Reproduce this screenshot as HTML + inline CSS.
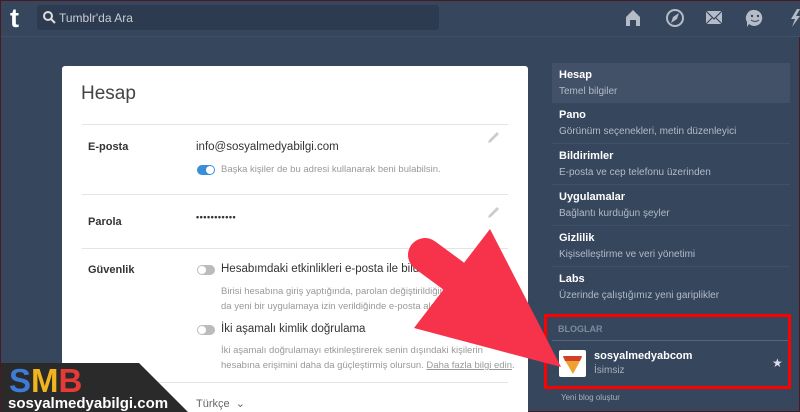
<!DOCTYPE html>
<html><head><meta charset="utf-8"><style>
*{margin:0;padding:0;box-sizing:border-box}
html{width:800px;height:412px;overflow:hidden}
body{width:800px;height:412px;overflow:hidden;background:#36465d;font-family:"Liberation Sans",Arial,sans-serif;position:relative;border:1px solid #4a1a22}
.hdr{position:absolute;left:0;top:0;width:800px;height:36px;background:#36465d;border-bottom:1px solid #3e4f68}
.logo{position:absolute;left:9px;top:2px;color:#fff;font-weight:bold;font-size:27px;font-family:"Liberation Sans",sans-serif}
.search{position:absolute;left:36px;top:4px;width:402px;height:25px;background:#2d3b50;border-radius:3px;color:#c8ccd3;font-size:12px;padding:6px 0 0 22px}
.card{position:absolute;left:61px;top:65px;width:466px;height:346px;background:#fff;border-radius:3px 3px 0 0}
.t{position:absolute;font-size:11px;color:#333;white-space:nowrap}
.g{position:absolute;font-size:9.5px;color:#999;white-space:nowrap}
.hr{position:absolute;left:20px;right:20px;height:1px;background:#e4e4e4}
.tg{position:absolute;width:18px;height:10px;border-radius:5px;background:#bbb}
.tg::after{content:"";position:absolute;top:1px;left:1px;width:8px;height:8px;border-radius:50%;background:#fff}
.tg.on{background:#3a8ed6}.tg.on::after{left:9px}
.side{position:absolute;left:551px;width:238px;height:41px;border-bottom:1px solid #3f5068;padding:6px 0 0 7px}
.side b{display:block;color:#fff;font-size:11px}
.side span{display:block;color:#b3bbc7;font-size:10px;margin-top:5px}
</style></head><body>
<div class="hdr">
<div class="logo">t</div>
<div class="search">Tumblr'da Ara
<svg style="position:absolute;left:6px;top:6px" width="13" height="13"><circle cx="5" cy="5" r="4" stroke="#ddd" stroke-width="2" fill="none"/><line x1="8" y1="8" x2="12" y2="12" stroke="#ddd" stroke-width="2"/></svg></div>
<svg style="position:absolute;left:622px;top:7px" width="180" height="20" fill="#b5bcc7">
<path d="M3 9 L10 2 L17 9 L17 18 L13 18 L13 12 L7 12 L7 18 L3 18Z"/>
<circle cx="52" cy="10" r="8" stroke="#b5bcc7" stroke-width="2" fill="none"/><path d="M56 5 L50 9 L48 15 L54 11Z"/>
<rect x="83" y="3" width="16" height="13"/><path d="M83 3 L91 11 L99 3 M83 16 L89 10 M99 16 L93 10" stroke="#36465d" stroke-width="1.2" fill="none"/>
<path d="M132 2 a8 8 0 1 1 -6 14 l-2 3 l0 -5 a8 8 0 0 1 8 -12Z"/><circle cx="129" cy="8" r="1.2" fill="#36465d"/><circle cx="135" cy="8" r="1.2" fill="#36465d"/><path d="M128 12 q4 3 8 0" stroke="#36465d" fill="none"/>
<path d="M174 1 L168 11 L172 11 L169 19 L177 8 L173 8 L177 1Z"/>
</svg>
</div>
<div class="card">
<div class="t" style="left:19px;top:17px;font-size:19px;color:#444">Hesap</div>
<div class="hr" style="top:58px"></div>
<div class="t" style="left:26px;top:75px;font-weight:bold">E-posta</div>
<div class="t" style="left:134px;top:75px;font-size:11.5px">info@sosyalmedyabilgi.com</div>
<div class="tg on" style="left:135px;top:99px"></div>
<div class="g" style="left:159px;top:98px">Başka kişiler de bu adresi kullanarak beni bulabilsin.</div>
<div class="hr" style="top:128px"></div>
<div class="t" style="left:26px;top:150px;font-weight:bold">Parola</div>
<div class="t" style="left:134px;top:146px;font-size:9px;font-weight:bold;letter-spacing:0.5px">•••••••••••</div>
<svg style="position:absolute;left:424px;top:65px" width="14" height="14"><path d="M2 12 L3 9 L11 1 L13 3 L5 11Z" fill="#ccc"/></svg>
<svg style="position:absolute;left:424px;top:140px" width="14" height="14"><path d="M2 12 L3 9 L11 1 L13 3 L5 11Z" fill="#ccc"/></svg>
<div class="hr" style="top:182px"></div>
<div class="t" style="left:26px;top:198px;font-weight:bold">Güvenlik</div>
<div class="tg" style="left:135px;top:199px"></div>
<div class="t" style="left:159px;top:197px;font-size:11.5px">Hesabımdaki etkinlikleri e-posta ile bildir</div>
<div class="g" style="left:159px;top:218px;line-height:15px">Birisi hesabına giriş yaptığında, parolan değiştirildiğinde<br>da yeni bir uygulamaya izin verildiğinde e-posta alacaksın.</div>
<div class="tg" style="left:135px;top:259px"></div>
<div class="t" style="left:159px;top:257px;font-size:11.5px">İki aşamalı kimlik doğrulama</div>
<div class="g" style="left:159px;top:277px;line-height:15px">İki aşamalı doğrulamayı etkinleştirerek senin dışındaki kişilerin<br>hesabına erişimini daha da güçleştirmiş olursun. <u>Daha fazla bilgi edin</u>.</div>
<div class="hr" style="top:316px"></div>
<div class="t" style="left:134px;top:331px;color:#666">Türkçe &nbsp;⌄</div>
</div>
<div class="side" style="top:62px;background:#425168;height:40px"><b>Hesap</b><span>Temel bilgiler</span></div>
<div class="side" style="top:102px"><b>Pano</b><span>Görünüm seçenekleri, metin düzenleyici</span></div>
<div class="side" style="top:143px"><b>Bildirimler</b><span>E-posta ve cep telefonu üzerinden</span></div>
<div class="side" style="top:184px"><b>Uygulamalar</b><span>Bağlantı kurduğun şeyler</span></div>
<div class="side" style="top:225px"><b>Gizlilik</b><span>Kişiselleştirme ve veri yönetimi</span></div>
<div class="side" style="top:266px;border:none"><b>Labs</b><span>Üzerinde çalıştığımız yeni gariplikler</span></div>
<div style="position:absolute;left:543px;top:313px;width:247px;height:75px;border:3px solid #f00"></div>
<div style="position:absolute;left:557px;top:323px;color:#7d8a9c;font-size:9px;font-weight:bold">BLOGLAR</div>
<div style="position:absolute;left:551px;top:339px;width:236px;height:1px;background:#55657c"></div>
<div style="position:absolute;left:558px;top:349px;width:27px;height:27px;background:#fff;border-radius:2px"><svg width="27" height="27"><path d="M4 7 L23 7 L14 24Z" fill="#f0a030"/><path d="M4 6 L23 6 L21 11 L6 11Z" fill="#d0402a"/></svg></div>
<div style="position:absolute;left:593px;top:349px;color:#fff;font-weight:bold;font-size:11px">sosyalmedyabcom</div>
<div style="position:absolute;left:593px;top:364px;color:#a8b1bf;font-size:10px">İsimsiz</div>
<div style="position:absolute;left:771px;top:355px;color:#dde;font-size:12px">★</div>
<div style="position:absolute;left:560px;top:392px;color:#a8b1bf;font-size:8px">Yeni blog oluştur</div>
<svg style="position:absolute;left:0;top:0" width="800" height="412">
<line x1="424" y1="254" x2="462" y2="282" stroke="#f7334b" stroke-width="34" stroke-linecap="round"/>
<path d="M489 228 L413 327 L560 366Z" fill="#f7334b"/>
<path d="M0 362 L138 362 L188 412 L0 412Z" fill="#2a2a2a"/>
<text x="8" y="391" font-family="Liberation Sans" font-weight="bold" font-size="33"><tspan fill="#3e7bd8">S</tspan><tspan fill="#f2b41c">M</tspan><tspan fill="#e53a35">B</tspan></text>
<text x="7" y="407" fill="#fff" font-family="Liberation Sans" font-weight="bold" font-size="15">sosyalmedyabilgi.com</text>
</svg>
</body></html>
